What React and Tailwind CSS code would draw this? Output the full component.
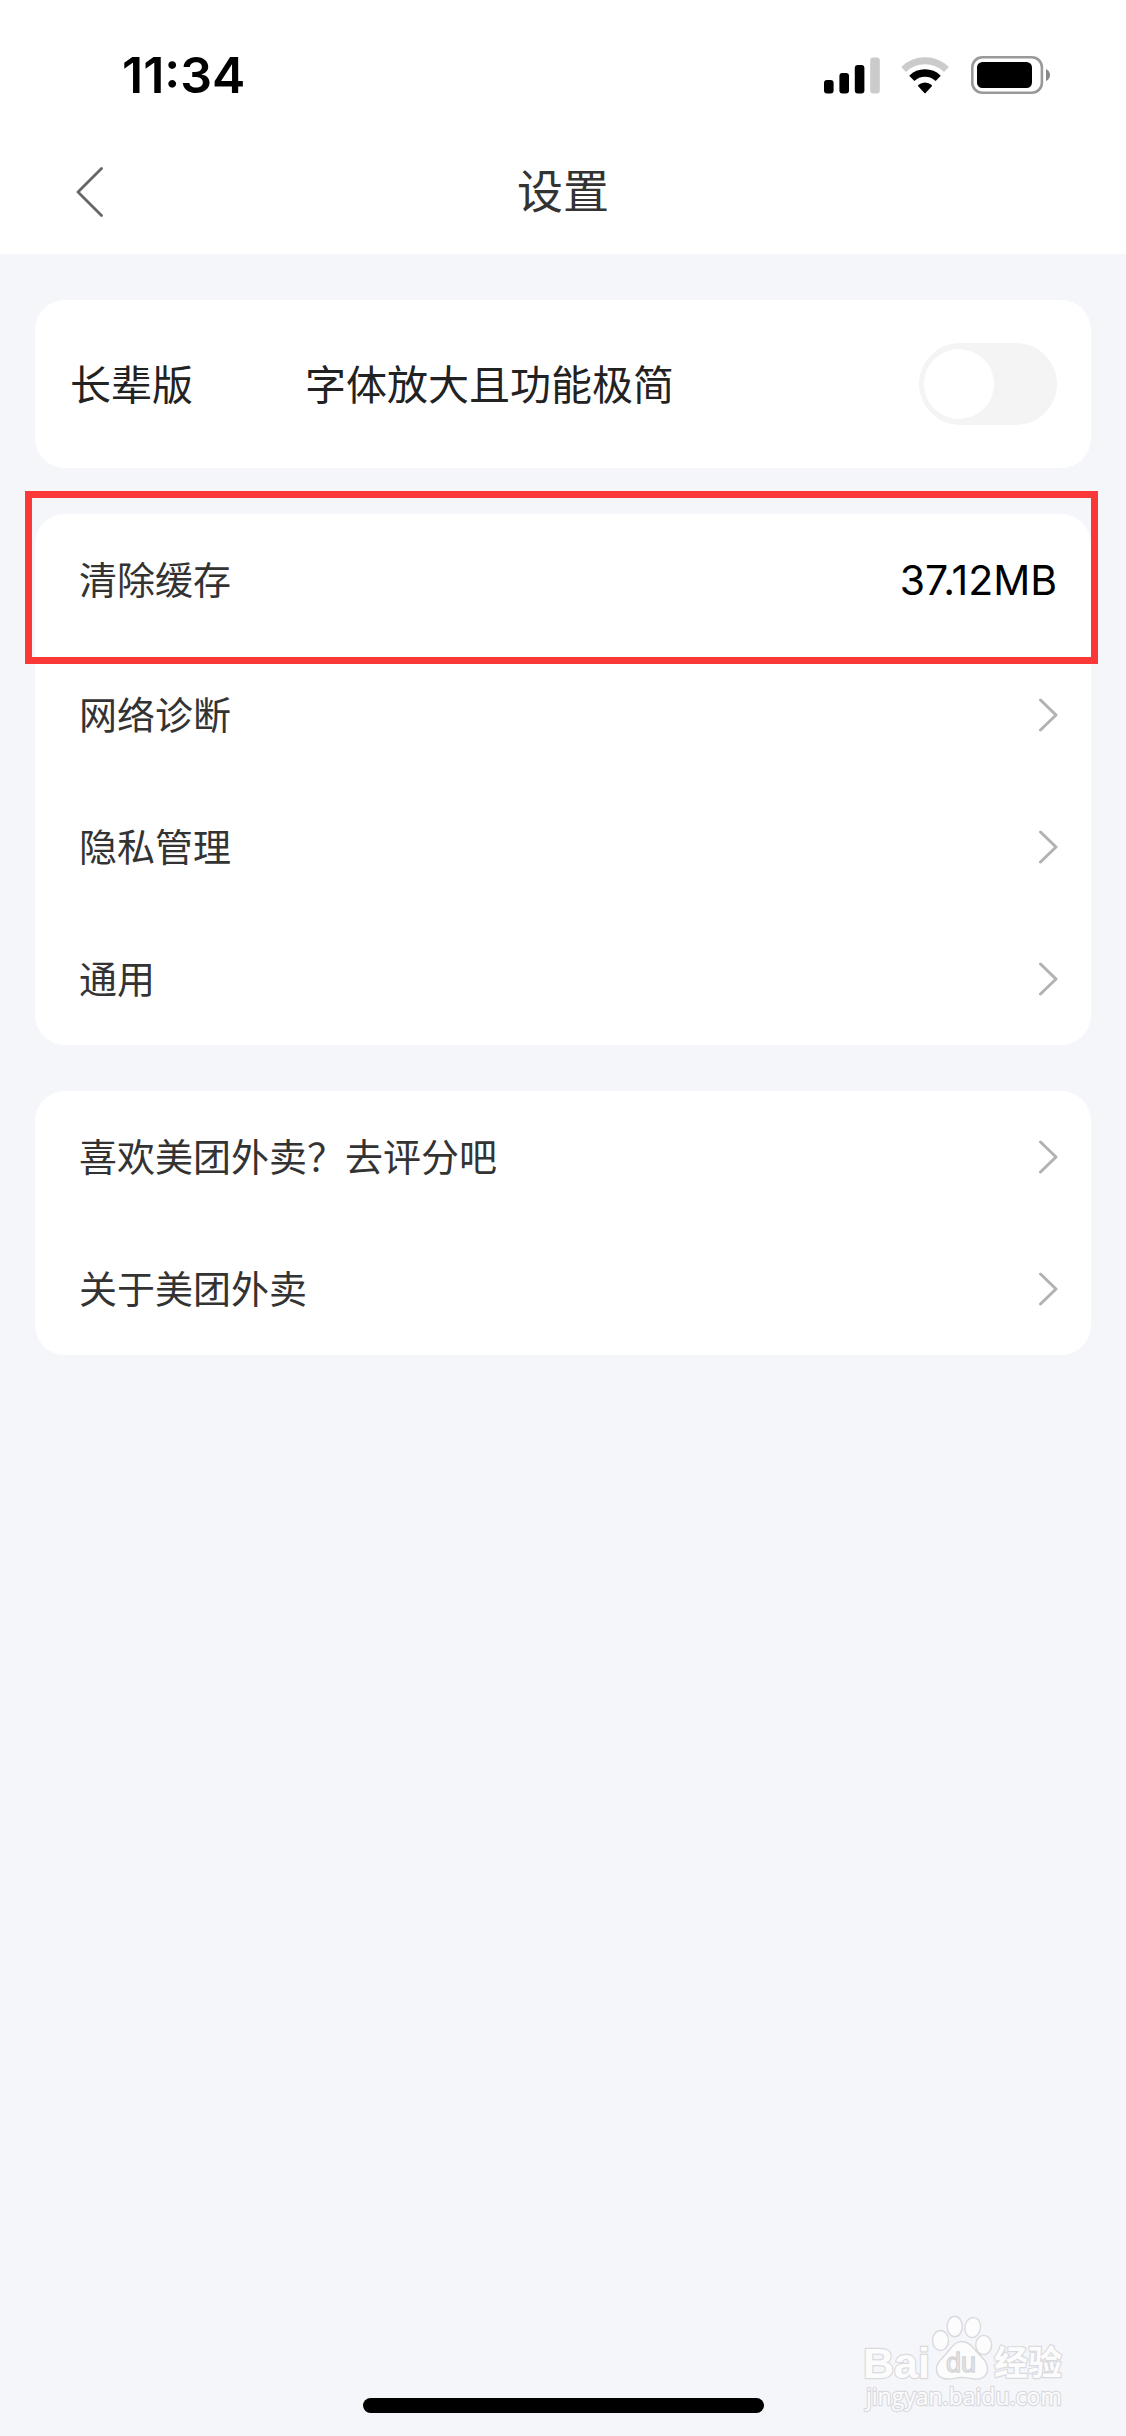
import React, { useState } from 'react';

const accountItems = ['网络诊断', '隐私管理', '通用'];
const aboutItems = ['喜欢美团外卖？去评分吧', '关于美团外卖'];

const StatusBar = () => (
  <div className="flex h-[102px] items-center justify-between pr-[75px] pl-[122px]">
    <span className="font-['Inter',sans-serif] text-[50px] leading-none font-semibold text-black">11:34</span>
    <div className="flex items-center">
      {/* Signal */}
      <svg className="mr-[21px] h-[38px] w-14" viewBox="0 0 56 38" aria-hidden="true">
        <rect x="0" y="24" width="9.6" height="13.4" rx="3" />
        <rect x="15.4" y="17" width="9.6" height="20.4" rx="3" />
        <rect x="30.8" y="9" width="9.6" height="28.4" rx="3" />
        <rect x="46.2" y="1.6" width="9.6" height="35.8" rx="3" fill="#cbcbcb" />
      </svg>
      {/* Wifi */}
      <svg className="mr-[22px] h-[38px] w-12" viewBox="0 0 48 38" aria-hidden="true">
        <path d="M2.600 13.500A30.500 30.500 0 0 1 45.400 13.500" fill="none" stroke="#cbcbcb" strokeWidth="7" />
        <path d="M10.800 22.400A19 19 0 0 1 37.200 22.400" fill="none" stroke="#000" strokeWidth="7.400" />
        <path d="M17.200 29A10.500 10.500 0 0 1 30.800 29Q31.200 29.800 30.600 30.600L24.600 37Q24 37.600 23.400 37L17.400 30.600Q16.800 29.800 17.200 29Z" />
      </svg>
      {/* Battery */}
      <svg className="h-[38px] w-20" viewBox="0 0 80 38" aria-hidden="true">
        <rect x="1.3" y="1.3" width="69.6" height="35.4" rx="10" fill="none" stroke="#999" strokeWidth="2.6" />
        <rect x="6" y="6" width="55" height="26" rx="5.5" />
        <path d="M75 13Q79 15 79 19Q79 23 75 25Z" fill="#888" />
      </svg>
    </div>
  </div>
);

const Header = () => (
  <header className="bg-white pt-6">
    <StatusBar />
    <div className="grid h-32 grid-cols-[1fr_auto_1fr] items-center">
      <button type="button" aria-label="返回" className="justify-self-start pt-1 pl-[76px]">
        <svg className="h-[50px] w-7" viewBox="0 0 28 50" fill="none" stroke="#666" strokeWidth="2.8" strokeLinecap="round" strokeLinejoin="round">
          <path d="M25.5 1.500L2 25L25.500 48.500" />
        </svg>
      </button>
      <h1 className="pb-1 text-[46px] leading-none text-[#333]">设置</h1>
    </div>
  </header>
);

const Arrow = () => (
  <svg className="h-9 w-5" viewBox="0 0 20 36" fill="none" stroke="#b2b2b2" strokeWidth="3" strokeLinecap="round" strokeLinejoin="round" aria-hidden="true">
    <path d="M2.5 3L18 18L2.5 33" />
  </svg>
);

const LinkRow = ({ label }) => (
  <a href="#" className="flex h-[132px] items-center justify-between pr-[33px] pl-11 text-[#333]">
    <span className="pb-1">{label}</span>
    <Arrow />
  </a>
);

const ElderModeCard = () => {
  const [enabled, setEnabled] = useState(false);

  return (
    <section className="flex h-[168px] items-center rounded-[30px] bg-white pr-[34px] pl-[35px] text-[41px] text-[#222]">
      <label htmlFor="elder-mode" className="flex flex-1 items-center gap-28 pb-1">
        <span>长辈版</span>
        <span>字体放大且功能极简</span>
      </label>
      <input
        id="elder-mode"
        type="checkbox"
        role="switch"
        checked={enabled}
        onChange={(e) => setEnabled(e.target.checked)}
        className="flex h-[82px] w-[138px] appearance-none items-center rounded-full bg-[#f4f4f4] px-[5px] before:size-[70px] before:rounded-full before:bg-white checked:justify-end checked:bg-[#ffd100]"
      />
    </section>
  );
};

const Watermark = () => (
  <svg className="absolute right-14 bottom-5 h-[104px] w-[210px]" viewBox="0 0 210 104" role="img" aria-label="Baidu经验">
    <g fill="#fcfcfd" stroke="#dadade" strokeWidth="1.4">
      <ellipse cx="80.5" cy="28.500" rx="8" ry="10" />
      <ellipse cx="94.7" cy="14.500" rx="7.600" ry="10.200" />
      <ellipse cx="112.7" cy="15.500" rx="7.800" ry="10" transform="rotate(10 112.7 15.500)" />
      <ellipse cx="123.700" cy="33" rx="8" ry="9.600" />
      <path d="M101.500 29.500C108.500 29.500 112.500 34.500 116.500 39.500C121.500 45.500 127.500 48.500 127.500 57C127.500 64 121.500 68 114.500 67C109.500 66 105.500 65.500 101.500 65.500C97.500 65.500 93.500 67 87.500 67C80.500 67 76 63 76.500 56C77 49 83.500 46 88.500 39C92.500 34 95.500 29.500 101.500 29.500Z" />
    </g>
    <g fill="#fcfcfd" stroke="#dadade" strokeWidth="2.4" paintOrder="stroke" strokeLinejoin="round">
      <text x="3" y="66" fontSize="43" fontWeight="700" fontFamily="Liberation Sans, sans-serif">Bai</text>
      <text x="134" y="63" fontSize="34" fontWeight="700" fontFamily="Noto Sans CJK SC, sans-serif">经验</text>
      <text x="6" y="93" fontSize="23" fontFamily="Open Sans, sans-serif">jingyan.baidu.com</text>
    </g>
    <text x="86" y="60" fontSize="27" fontFamily="Liberation Sans, sans-serif" fill="#f0f1f4" stroke="#d4d4d8" strokeWidth="1.4">du</text>
  </svg>
);

const App = () => (
  <div className="relative flex min-h-screen flex-col bg-[#f4f6fa] font-['Noto_Sans_CJK_SC',sans-serif]">
    <Header />

    <main className="flex flex-col gap-[46px] px-[35px] pt-[46px] text-[38px] leading-none">
      <ElderModeCard />

      <section className="rounded-[30px] bg-white">
        <div className="relative mb-[3px]">
          <button type="button" className="flex h-[132px] w-full items-center justify-between pr-[34px] pl-11 text-[#333]">
            <span className="pb-1">清除缓存</span>
            <span className="font-['Inter',sans-serif] text-[41px] text-black">37.12MB</span>
          </button>
          {/* Highlight frame over the cache row */}
          <div className="pointer-events-none absolute -top-[23px] -right-[7px] -bottom-[18px] -left-[10px] border-[7px] border-[#fb3838]" />
        </div>
        {accountItems.map((label) => (
          <LinkRow key={label} label={label} />
        ))}
      </section>

      <section className="rounded-[30px] bg-white">
        {aboutItems.map((label) => (
          <LinkRow key={label} label={label} />
        ))}
      </section>
    </main>

    <div className="mx-auto mt-auto mb-[23px] h-[15px] w-[401px] rounded-full bg-black" />
    <Watermark />
  </div>
);

export default App;
